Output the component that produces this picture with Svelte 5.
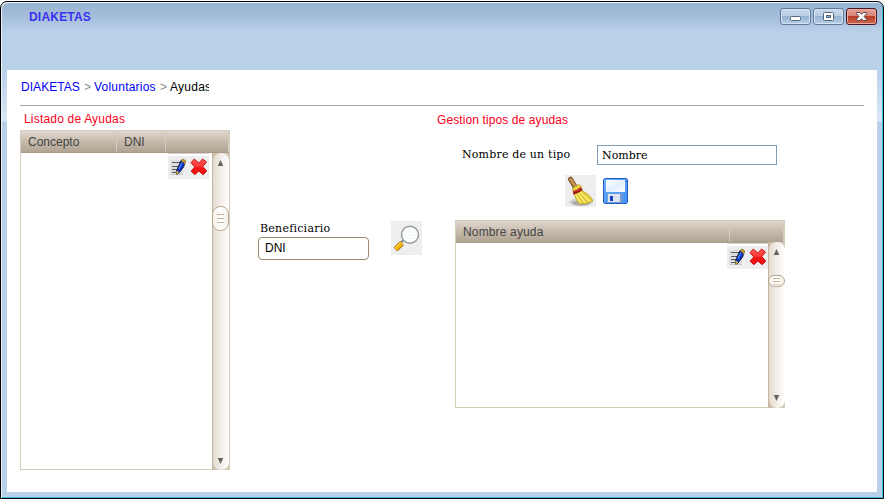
<script>
  const crumbs = ['DIAKETAS', 'Voluntarios'];
  const windowButtons = ['min', 'max', 'close'];
</script>

{#snippet rowIcons()}
  <div class="strip"></div>
  <div class="actions">
    <svg width="18" height="18" viewBox="0 0 18 18">
      <rect x="0" y="2" width="13" height="15" fill="#dedfe0" />
      <path d="M2 4.5h8M2 8.5h7M2 11.5h5M2 14.5h5" stroke="#5c5c5c" stroke-width="1.2" />
      <path d="M1 16.5h12" stroke="#c8c8c8" />
      <path d="M11 2.5l3.8 1.2-1 5L9 15l-2.2 1.3-.5-3.3z" fill="#0b32c4" stroke="#17213f" />
      <path d="M10.8 2.5L13 1l2.7 1.8-.8 3.5-1.8-2z" fill="#c7982f" stroke="#775f29" stroke-width=".6" />
      <path d="M11.8 5l-3 6" stroke="#4c8cff" stroke-width="1.2" />
      <path d="M6.3 12.4l3 1.8L6.6 16.4z" fill="#e9b93a" />
    </svg>
    <svg width="18" height="18" viewBox="0 0 18 18">
      <defs>
        <linearGradient id="cross" x2="0" y2="1">
          <stop stop-color="#ff5a55" /><stop offset=".5" stop-color="#ff3434" /><stop offset=".55" stop-color="#f51414" /><stop offset="1" stop-color="#f20d0d" />
        </linearGradient>
      </defs>
      <path d="M4.3 1L8.8 5 12.6 1 16.5 4 12.8 8.6 16.7 13 13.2 16.7 8.7 13 5 16.7 1 13.2 4.8 9 1 4.7z" fill="url(#cross)" stroke="#c91212" stroke-linejoin="round" />
    </svg>
  </div>
{/snippet}

{#snippet scroll(small)}
  <div class="scroll" class:small>
    <div class="track">
      <svg class="up" width="7" height="6" viewBox="0 0 7 6"><path d="M3.5 0L6.3 6H.7z" fill="#65625f" /></svg>
      <div class="thumb"><i></i><i></i><i></i></div>
      <svg class="down" width="7" height="6" viewBox="0 0 7 6"><path d="M.7 0h5.6L3.5 6z" fill="#65625f" /></svg>
    </div>
  </div>
{/snippet}

<div class="window">
  <header>
    <h1>DIAKETAS</h1>
    <div class="controls">
      {#each windowButtons as kind}
        <button class={kind} aria-label={kind}>
          <svg width="31" height="17" viewBox="0 0 31 17">
            {#if kind === 'min'}
              <rect x="10.5" y="8.5" width="10" height="4" rx="1" fill="#fff" stroke="#59677a" />
            {:else if kind === 'max'}
              <rect x="10.5" y="4.5" width="10" height="8" rx="1" fill="#fff" stroke="#59677a" />
              <rect x="13.5" y="7.5" width="4" height="2" fill="#8eaed0" stroke="#59677a" />
            {:else}
              <path d="M10.5 4.5h3.3l1.7 1.8 1.7-1.8h3.3v1.1l-2.4 2.9 2.4 2.9v1.1h-3.3l-1.7-1.8-1.7 1.8h-3.3v-1.1l2.4-2.9-2.4-2.9z" fill="#fff" stroke="#604650" />
            {/if}
          </svg>
        </button>
      {/each}
    </div>
  </header>

  <main>
    <nav>
      {#each crumbs as crumb}<a href="#top">{crumb}</a><span>&gt;</span>{/each}<b>Ayudas</b>
    </nav>

    <div class="columns">
      <section class="list">
        <h2>Listado de Ayudas</h2>
        <div class="table">
          <div class="thead">
            <div class="concept">Concepto</div>
            <div class="dni">DNI</div>
            <div class="rest"></div>
          </div>
          <div class="tbody">
            <div class="cells">{@render rowIcons()}</div>
            {@render scroll(false)}
          </div>
        </div>
      </section>

      <section class="search">
        <label>Beneficiario<input value="DNI" /></label>
        <div class="glass">
          <svg width="31" height="34" viewBox="0 0 31 34">
            <path d="M10 21.5l3-3" stroke="#85898c" stroke-width="2" />
            <path d="M4.5 28.5l6.5-6.5" stroke="#a77812" stroke-width="5.5" />
            <path d="M4.8 28.2l6-6" stroke="#f6b80d" stroke-width="3.8" />
            <path d="M4.2 26.8l5-5" stroke="#ffe15a" />
            <circle cx="19" cy="13.8" r="8.5" fill="#fbffff" stroke="#92979a" stroke-width="1.4" />
            <path d="M13 11h12M12 14h14M13 17h12" stroke="#f0f5f5" />
          </svg>
        </div>
      </section>

      <section class="types">
        <h2>Gestion tipos de ayudas</h2>
        <label><span>Nombre de un tipo</span><input value="Nombre" /></label>
        <div class="tools">
          <div class="broom">
            <svg width="31" height="32" viewBox="0 0 31 32">
              <ellipse cx="16" cy="27" rx="12" ry="4" fill="#aaa" opacity=".4" />
              <ellipse cx="16" cy="28" rx="9" ry="2.5" fill="#777" opacity=".45" />
              <path d="M5.6 4.2l4.4 7.6" stroke="#7b5429" stroke-width="5" stroke-linecap="round" />
              <path d="M5.8 4.2l4.4 7.6" stroke="#c29352" stroke-width="3" stroke-linecap="round" />
              <path d="M7.5 13.5l6-4 3 2 .5 4q8 4 11 10-2 1-3 2-3 0-4.500 1.500-3-1-5.500.500-4-4-6-11z" fill="#ecd541" stroke="#b49b24" stroke-width=".8" />
              <path d="M10.500 19l5 9M13 17.500l7 10M15.500 16.500l9 9.500" stroke="#fff181" stroke-width="1.4" />
              <path d="M12 19l5.500 9M14.500 18l7 9M16.500 16.500l9 8.500" stroke="#caae20" stroke-width=".7" />
              <path d="M8 17.700q5-.7 8.500-4.200" fill="none" stroke="#981717" stroke-width="3.400" />
              <path d="M8 17.200q4-.7 8-4" fill="none" stroke="#d9352b" stroke-width="1.200" />
            </svg>
          </div>
          <svg width="25" height="26" viewBox="0 0 25 26">
            <defs>
              <linearGradient id="disk" x2="1" y2="1"><stop stop-color="#6eaeff" /><stop offset="1" stop-color="#3d90f8" /></linearGradient>
              <linearGradient id="paper" x2="1" y2="1"><stop stop-color="#fff" /><stop offset=".55" stop-color="#e3efff" /><stop offset="1" stop-color="#fff" /></linearGradient>
            </defs>
            <path d="M1.500.500h22l1 1v23l-1 1h-22l-1-1v-23z" fill="url(#disk)" stroke="#255dbf" />
            <rect x="3" y="2" width="19" height="12" fill="url(#paper)" />
            <rect x="22.500" y="3" width="1.500" height="1" fill="#1e58b0" />
            <rect x="4.500" y="15.500" width="15" height="9" fill="#dde2f0" stroke="#6c9ddd" />
            <path d="M17 16h2v8h-2z" fill="#7897cb" />
            <rect x="7" y="18" width="3" height="5" fill="#173fc0" />
          </svg>
        </div>
        <div class="table">
          <div class="thead">
            <div class="name">Nombre ayuda</div>
            <div class="rest"></div>
          </div>
          <div class="tbody">
            <div class="cells">{@render rowIcons()}</div>
            {@render scroll(true)}
          </div>
        </div>
      </section>
    </div>
  </main>
</div>

<style>
  :global(body) { background: #fff; overflow: hidden; }
  * { box-sizing: border-box; }
  h1, h2 { margin: 0; font-size: 12px; line-height: 14px; }
  svg { display: block; flex: none; }
  .window {
    width: 884px; height: 498px; margin-top: 1px; padding: 0 6px 6px 5px; display: flex; flex-direction: column;
    border: 1px solid #000; border-radius: 7px 7px 0 0;
    box-shadow: inset 1px 1px #eef5fc, inset -1px -1px #43bfe6;
    background: linear-gradient(#98b3d0 0, #a3bdda 14px, #b9d0e9 30px, #bad1ea 68px, #d9e6f5 119px, #b9d0e9 120px);
    font-family: "Liberation Sans", Arial, sans-serif; font-size: 12px;
  }
  header { height: 68px; flex: none; display: flex; justify-content: space-between; padding: 6px 0 0 23px; }
  h1 { color: #3d30f5; padding-top: 2px; letter-spacing: .2px; }
  .controls { display: flex; gap: 2px; }
  .controls button {
    width: 31px; height: 17px; padding: 0; border: 1px solid #637899; border-radius: 3px; overflow: hidden;
    background: linear-gradient(#c8d9eb 0, #b8cce2 47%, #94b1d0 48%, #b8d1e9 100%); box-shadow: inset 0 0 0 1px #d4e3f3;
  }
  .controls svg { margin: -1px; }
  .controls .close {
    border-color: #4c1622; background: linear-gradient(#e5a298, #d98376 47%, #b63a27 48%, #ce6849);
    box-shadow: inset 0 0 0 1px #e5aaa0;
  }
  main { flex: 1; margin-left: 1px; background: #fff; padding: 10px 13px 0; min-height: 0; }
  nav { height: 26px; display: flex; line-height: 14px; padding-left: 1px; border-bottom: 1px solid #aaa699; }
  nav a { color: #0000f8; text-decoration: none; }
  nav a:first-child { width: 63px; letter-spacing: .05px; }
  nav a:nth-of-type(2) { width: 66px; letter-spacing: .22px; }
  nav span { color: #888; width: 10px; }
  nav b { font-weight: normal; color: #000; width: 39px; overflow: hidden; letter-spacing: .25px; }
  .columns { display: flex; align-items: flex-start; }
  h2 { font-weight: normal; color: #fb0018; }
  .list { width: 210px; padding-top: 6px; }
  .list h2 { padding-left: 4px; height: 18px; letter-spacing: .19px; }
  .table { border: 1px solid #d6ccbb; display: flex; flex-direction: column; background: #fff; }
  .list .table { height: 340px; }
  .types .table { width: 330px; height: 188px; margin: 13px 0 0 18px; }
  .thead {
    height: 22px; flex: none; display: flex; color: #444; line-height: 22px;
    background: linear-gradient(#e0d8cf, #c8bdaf 45%, #b0a392); border-bottom: 1px solid #aa9b88;
  }
  .thead div { border-right: 1px solid #d4cabd; padding-left: 7px; }
  .concept { width: 96px; }
  .dni { width: 49px; }
  .name { width: 274px; letter-spacing: .15px; }
  .rest { flex: 1; }
  .tbody { flex: 1; display: flex; min-height: 0; }
  .cells { flex: 1; display: flex; flex-direction: column; align-items: flex-end; padding-right: 3px; }
  .types .cells { padding-right: 0; }
  .strip { width: 41px; height: 1px; background: #d6d3d0; }
  .actions { width: 41px; height: 23px; margin-top: 2px; padding: 2px 0 0 2px; background: #eee; display: flex; gap: 2px; }
  .scroll {
    width: 18px; border-left: 1px solid #c5b69f; margin: 0 -1px -1px 0; border-right: 1px solid #d6ccbb;
    background: linear-gradient(90deg, #ccbfad, #d5cab9);
  }
  .track {
    height: 100%; border-radius: 8px; display: flex; flex-direction: column; align-items: flex-start;
    padding: 7px 0 6px 4px; background: linear-gradient(90deg, #e5dbcf, #f5f2ee 60%, #fff);
  }
  .down { margin-top: auto; }
  .thumb {
    width: 17px; height: 25px; margin: 40px 0 0 -5px; border: 1px solid #b8a88c; border-radius: 8px; flex: none;
    background: linear-gradient(90deg, #f5efe7, #fff 50%, #f5efe7); display: flex; flex-direction: column; align-items: center;
    justify-content: center; gap: 3px;
  }
  .thumb i { width: 7px; height: 1px; background: #c3b497; }
  .small { width: 17px; border-right: 0; margin-top: -1px; }
  .small .track { padding-bottom: 7px; }
  .small .thumb { height: 12px; margin-top: 20px; border-radius: 6px; gap: 2px; }
  .small .thumb i:last-child { background: #d5cab6; }
  .search { width: 217px; padding: 115px 0 0 28px; display: flex; gap: 22px; }
  label { font: 11px/14px "DejaVu Serif", serif; color: #000; letter-spacing: .18px; }
  .search label { width: 111px; text-indent: 2px; padding-top: 1px; letter-spacing: .24px; }
  input { display: block; margin: 0; outline: none; color: #000; background: #fff; }
  .search input {
    width: 111px; height: 23px; margin-top: 1px; padding: 0 6px 2px; text-indent: 0; border: 1px solid #9b896c; border-radius: 4px;
    font: 12px "Liberation Sans", sans-serif;
  }
  .glass { width: 31px; height: 34px; background: #eee; }
  .types { width: 348px; margin-left: -10px; padding-top: 7px; }
  .types h2 { letter-spacing: .1px; }
  .types label { display: flex; margin: 18px 0 0 25px; }
  .types label span { width: 135px; padding-top: 3px; }
  .types input { width: 180px; height: 20px; padding: 0 4px; border: 1px solid #7f9db9; font: 11px "DejaVu Serif", serif; }
  .tools { display: flex; gap: 7px; align-items: center; padding: 10px 0 0 128px; }
  .broom { width: 31px; height: 32px; background: #eee; }
</style>
